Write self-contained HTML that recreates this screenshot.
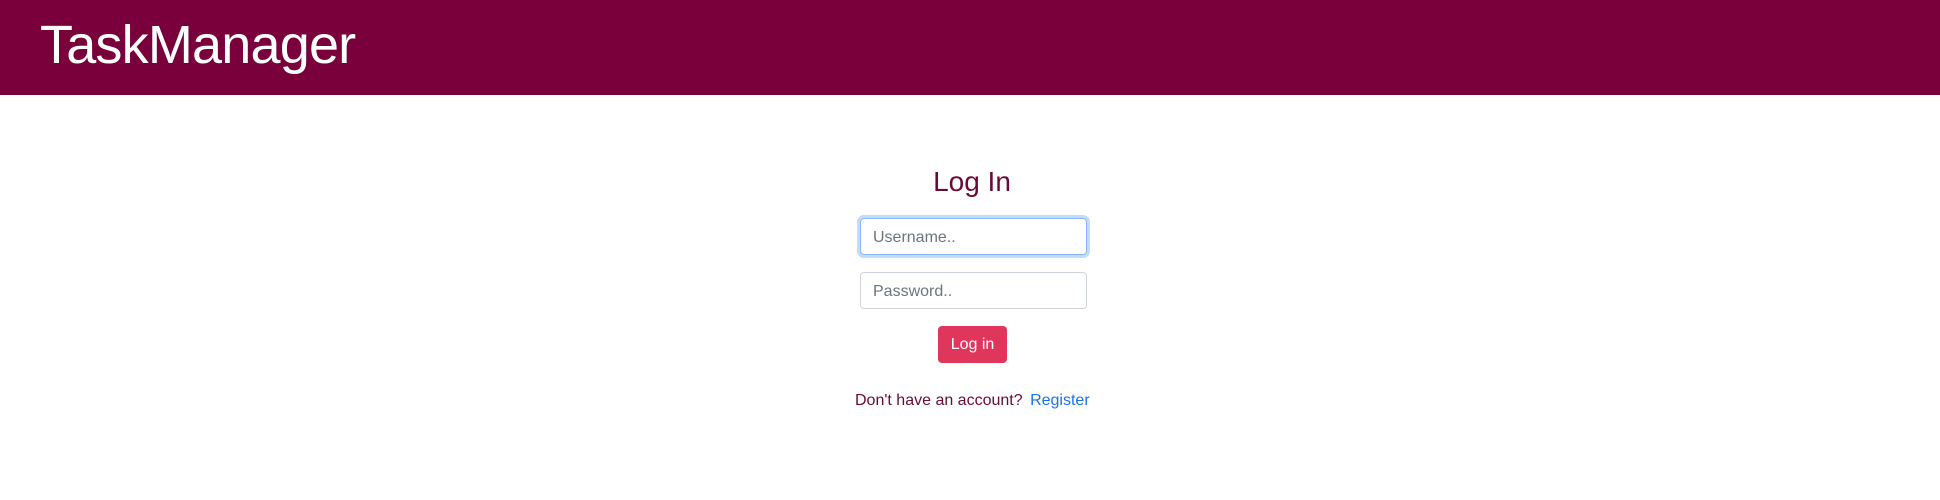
<!DOCTYPE html>
<html><head><style>
*{box-sizing:border-box;margin:0;padding:0}
body{width:1940px;height:500px;background:#fff;font-family:"Liberation Sans",Arial,sans-serif;position:relative;overflow:hidden}
.hdr{position:absolute;left:0;top:0;width:1940px;height:95px;background:#7a003c}
.hdr h1{position:absolute;left:40px;top:13px;font-weight:400;font-size:54px;color:#fff;letter-spacing:-0.8px;line-height:64px}
.t{position:absolute;left:0;width:1940px;text-align:center;color:#6b0a37;font-size:28px;top:164px;line-height:36px;padding-left:4px}
.in{position:absolute;left:860px;width:227px;height:37px;border:1px solid #ced4da;border-radius:4px;font-size:16px;color:#6c757d;padding:9px 12px;line-height:20px}
.f{border-color:#86b7fe;box-shadow:0 0 0 3px #c2dbfe}
.btn{position:absolute;left:938px;top:326px;width:69px;height:37px;background:#e0365c;color:#fff;border-radius:4px;font-size:16px;text-align:center;line-height:38px}
.b{position:absolute;left:855px;top:391px;font-size:16px;color:#6b0a37;line-height:20px}
.b span{color:#1a73e8;margin-left:3px}
</style></head><body>
<div class="hdr"><h1>TaskManager</h1></div>
<div class="t">Log In</div>
<div class="in f" style="top:218px">Username..</div>
<div class="in" style="top:272px">Password..</div>
<div class="btn">Log in</div>
<div class="b">Don't have an account? <span>Register</span></div>
</body></html>
